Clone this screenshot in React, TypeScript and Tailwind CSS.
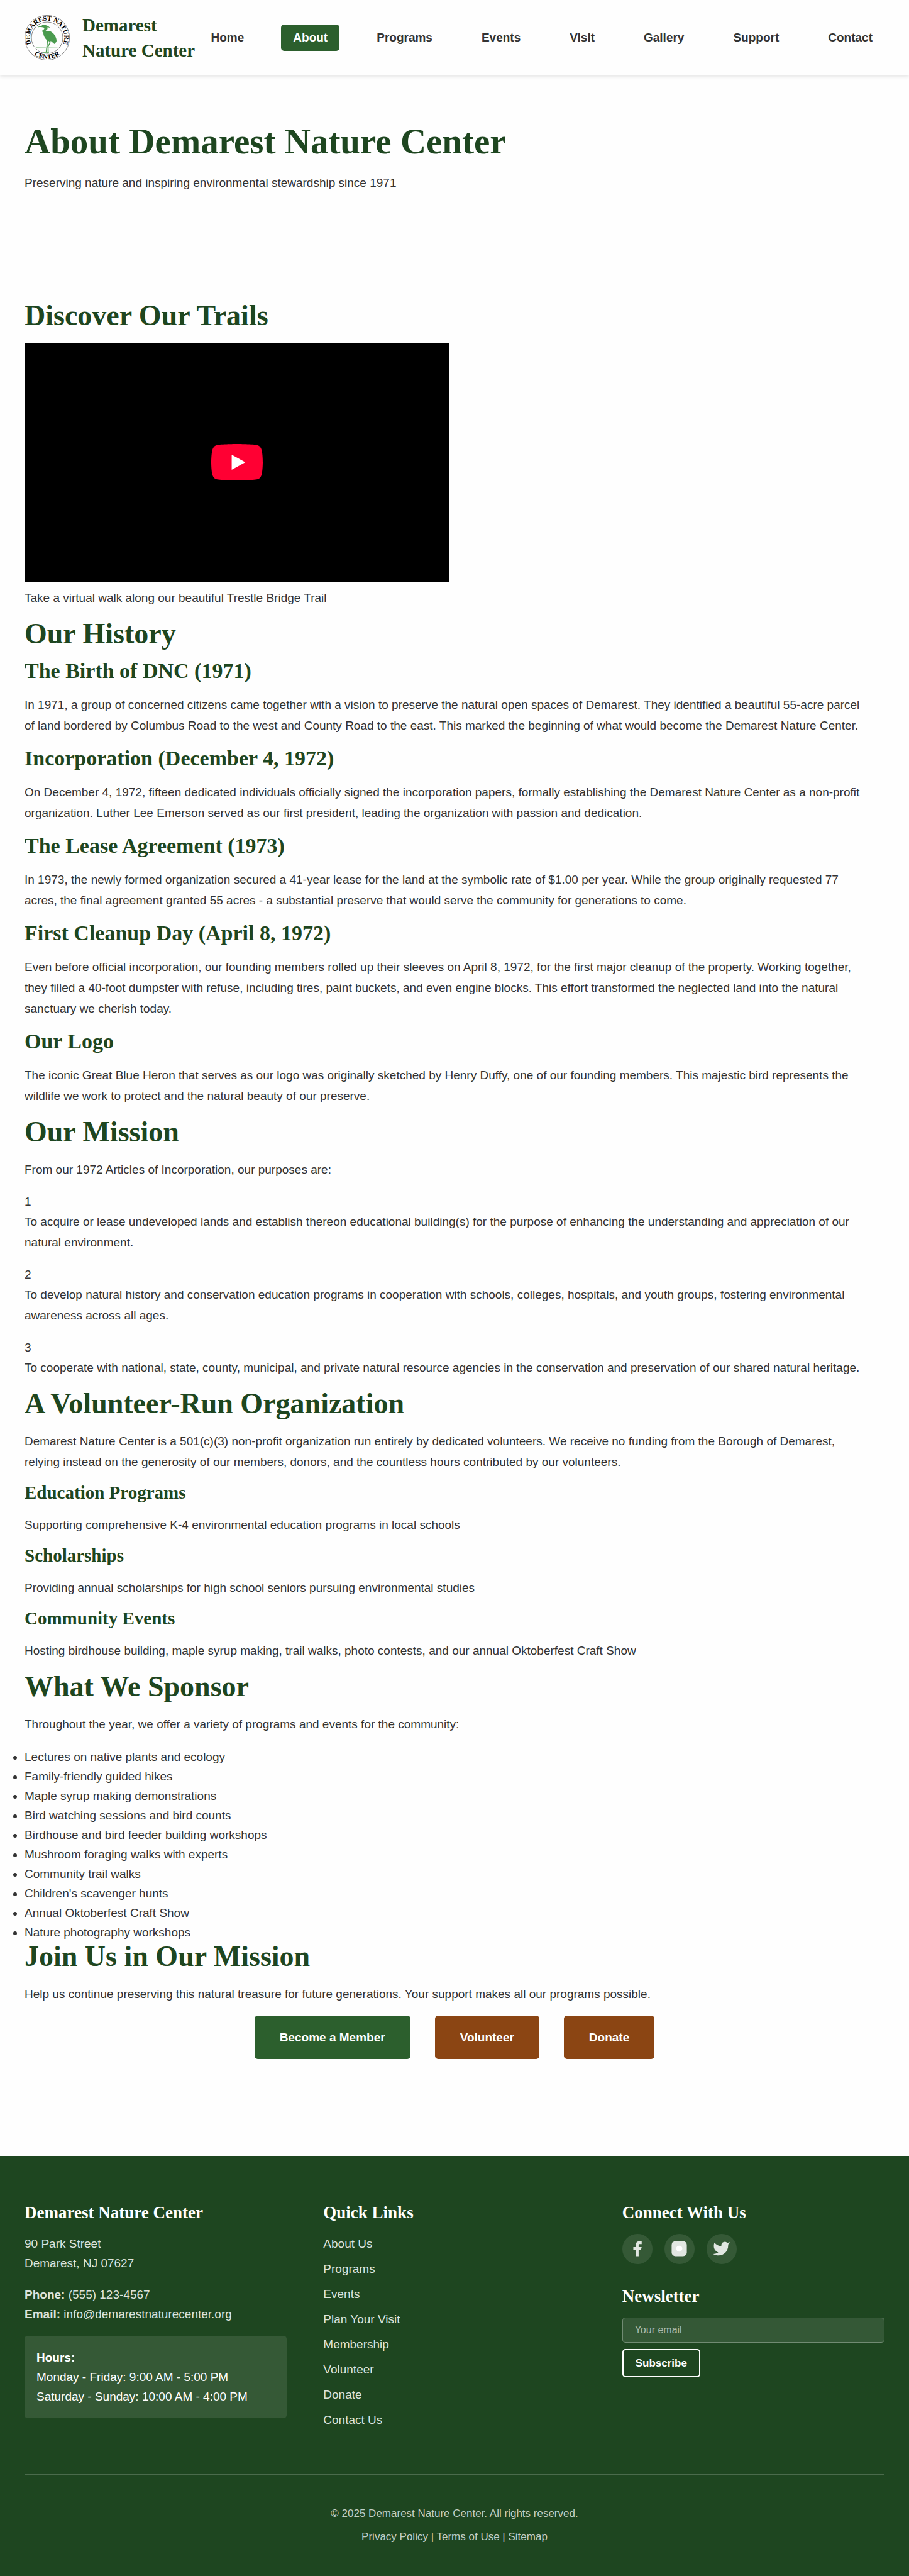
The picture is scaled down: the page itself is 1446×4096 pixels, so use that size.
import React from "react";

const navItems = ["Home", "About", "Programs", "Events", "Visit", "Gallery", "Support", "Contact"];

const history = [
  {
    title: "The Birth of DNC (1971)",
    text: "In 1971, a group of concerned citizens came together with a vision to preserve the natural open spaces of Demarest. They identified a beautiful 55-acre parcel of land bordered by Columbus Road to the west and County Road to the east. This marked the beginning of what would become the Demarest Nature Center.",
  },
  {
    title: "Incorporation (December 4, 1972)",
    text: "On December 4, 1972, fifteen dedicated individuals officially signed the incorporation papers, formally establishing the Demarest Nature Center as a non-profit organization. Luther Lee Emerson served as our first president, leading the organization with passion and dedication.",
  },
  {
    title: "The Lease Agreement (1973)",
    text: "In 1973, the newly formed organization secured a 41-year lease for the land at the symbolic rate of $1.00 per year. While the group originally requested 77 acres, the final agreement granted 55 acres - a substantial preserve that would serve the community for generations to come.",
  },
  {
    title: "First Cleanup Day (April 8, 1972)",
    text: "Even before official incorporation, our founding members rolled up their sleeves on April 8, 1972, for the first major cleanup of the property. Working together, they filled a 40-foot dumpster with refuse, including tires, paint buckets, and even engine blocks. This effort transformed the neglected land into the natural sanctuary we cherish today.",
  },
  {
    title: "Our Logo",
    text: "The iconic Great Blue Heron that serves as our logo was originally sketched by Henry Duffy, one of our founding members. This majestic bird represents the wildlife we work to protect and the natural beauty of our preserve.",
  },
];

const purposes = [
  "To acquire or lease undeveloped lands and establish thereon educational building(s) for the purpose of enhancing the understanding and appreciation of our natural environment.",
  "To develop natural history and conservation education programs in cooperation with schools, colleges, hospitals, and youth groups, fostering environmental awareness across all ages.",
  "To cooperate with national, state, county, municipal, and private natural resource agencies in the conservation and preservation of our shared natural heritage.",
];

const efforts = [
  { title: "Education Programs", text: "Supporting comprehensive K-4 environmental education programs in local schools" },
  { title: "Scholarships", text: "Providing annual scholarships for high school seniors pursuing environmental studies" },
  {
    title: "Community Events",
    text: "Hosting birdhouse building, maple syrup making, trail walks, photo contests, and our annual Oktoberfest Craft Show",
  },
];

const sponsored = [
  "Lectures on native plants and ecology",
  "Family-friendly guided hikes",
  "Maple syrup making demonstrations",
  "Bird watching sessions and bird counts",
  "Birdhouse and bird feeder building workshops",
  "Mushroom foraging walks with experts",
  "Community trail walks",
  "Children's scavenger hunts",
  "Annual Oktoberfest Craft Show",
  "Nature photography workshops",
];

const quickLinks = ["About Us", "Programs", "Events", "Plan Your Visit", "Membership", "Volunteer", "Donate", "Contact Us"];

function Logo() {
  return (
    <svg viewBox="0 0 360 360" className="h-[72px] w-[72px] shrink-0" role="img" aria-label="Demarest Nature Center logo">
      <defs>
        <path id="ring-top" d="M57 237 A136 136 0 1 1 303 237" />
        <path id="ring-bottom" d="M20 237 A170 170 0 0 0 340 237" />
      </defs>
      <circle cx="180" cy="180" r="178" fill="#fff" stroke="#333" strokeWidth="3" />
      <circle cx="180" cy="180" r="125" fill="#fdfdfd" stroke="#333" strokeWidth="3" />
      <g className="font-['Liberation_Serif',serif] font-bold" fill="#000" textAnchor="middle" fontSize="53">
        <text>
          <textPath href="#ring-top" startOffset="50%">DEMAREST NATURE</textPath>
        </text>
        <text>
          <textPath href="#ring-bottom" startOffset="50%">CENTER</textPath>
        </text>
      </g>
      <path
        fill="#4a9a4e"
        d="M103 94L134 86C140 78 156 72 168 80C180 82 196 90 203 102C195 98 188 96 182 96C186 108 180 118 170 122C164 126 168 134 176 128C200 118 235 140 250 180C256 196 256 205 253 214L246 220L244 232C232 230 222 216 212 208C200 208 188 208 180 200C165 188 150 165 150 142C138 130 140 120 150 116C160 110 160 102 150 98C138 96 120 98 103 94Z"
      />
      <g fill="none" stroke="#4a9a4e" strokeLinecap="round">
        <path strokeWidth="8" d="M182 198L179 242L173 292M198 204L203 222L187 248L188 290" />
        <path strokeWidth="6" d="M152 296L192 296" />
        <path strokeWidth="3" d="M97 259L168 260M194 260L261 261" />
      </g>
    </svg>
  );
}

function H2({ children }: { children: React.ReactNode }) {
  return (
    <h2 className="mb-[21px] font-['Liberation_Serif',serif] text-[46px] leading-[45px] font-bold text-[#1e4620]">
      {children}
    </h2>
  );
}

function P({ children }: { children: React.ReactNode }) {
  return <p className="pr-5 leading-[33px]">{children}</p>;
}

function FooterHeading({ children }: { children: React.ReactNode }) {
  return (
    <h3 className="mb-[18px] font-['Liberation_Serif',serif] text-[27px] leading-8 font-bold text-white">{children}</h3>
  );
}

function SocialLink({ label, children }: { label: string; children: React.ReactNode }) {
  return (
    <a href="#" aria-label={label} className="flex h-12 w-12 items-center justify-center rounded-full bg-white/10 text-[#e2e7e2]">
      <svg viewBox="0 0 24 24" className="h-[29px] w-[29px]" fill="currentColor" aria-hidden="true">
        {children}
      </svg>
    </a>
  );
}

export default function App() {
  return (
    <div className="bg-[#fefefe] font-['Liberation_Sans',Arial,sans-serif] text-[19px] leading-[31px] text-[#333]">
      <header className="relative flex h-[120px] items-center justify-between border-b border-[#ddd] bg-[#fefefe] px-[39px] shadow-[0_2px_5px_rgba(0,0,0,0.1)]">
        <a href="#" className="flex items-center gap-5">
          <Logo />
          <span className="font-['Liberation_Serif',serif] text-[29px] leading-10 font-bold whitespace-nowrap text-[#1e4620]">
            Demarest
            <br />
            Nature Center
          </span>
        </a>
        <nav aria-label="Main">
          <ul className="flex gap-10">
            {navItems.map((item) => (
              <li key={item}>
                <a
                  href="#"
                  aria-current={item === "About" ? "page" : undefined}
                  className={
                    item === "About"
                      ? "block rounded-[5px] bg-[#2c5f2d] px-[19px] leading-[42px] font-bold text-white"
                      : "block rounded-[5px] px-[19px] leading-[42px] font-bold"
                  }
                >
                  {item}
                </a>
              </li>
            ))}
          </ul>
        </nav>
      </header>

      <main className="px-[39px] pt-[75px] pb-[154px]">
        <section className="mb-[172px]">
          <h1 className="mb-[19px] font-['Liberation_Serif',serif] text-[57px] leading-[60px] font-bold text-[#1e4620]">
            About Demarest Nature Center
          </h1>
          <p className="leading-[33px]">Preserving nature and inspiring environmental stewardship since 1971</p>
        </section>

        <section className="mb-[18px]">
          <H2>Discover Our Trails</H2>
          <div className="mb-[9px] flex aspect-video max-w-[675px] items-center justify-center bg-black">
            <button type="button" aria-label="Play video">
              <svg viewBox="0 0 68 48" className="h-[58px] w-[82px]" aria-hidden="true">
                <path
                  fill="#ff0033"
                  d="M66.52,7.74c-0.78-2.93-2.49-5.41-5.42-6.19C55.79,.13,34,0,34,0S12.21,.13,6.9,1.55C3.97,2.33,2.27,4.81,1.48,7.74C0.06,13.05,0,24,0,24s0.06,10.95,1.48,16.26c0.78,2.93,2.49,5.41,5.42,6.19C12.21,47.87,34,48,34,48s21.79-0.13,27.1-1.55c2.93-0.78,4.64-3.26,5.42-6.19C67.94,34.95,68,24,68,24S67.94,13.05,66.52,7.74z"
                />
                <path fill="#fff" d="M45,24 27,14 27,34z" />
              </svg>
            </button>
          </div>
          <P>Take a virtual walk along our beautiful Trestle Bridge Trail</P>
        </section>

        <section className="mb-[18px]">
          <H2>Our History</H2>
          <div className="flex flex-col gap-5">
            {history.map((entry) => (
              <article key={entry.title}>
                <h3 className="mb-[21px] font-['Liberation_Serif',serif] text-[34px] leading-8 font-bold text-[#1e4620]">
                  {entry.title}
                </h3>
                <P>{entry.text}</P>
              </article>
            ))}
          </div>
        </section>

        <section className="mb-[18px]">
          <H2>Our Mission</H2>
          <div className="flex flex-col gap-5">
            <P>From our 1972 Articles of Incorporation, our purposes are:</P>
            {purposes.map((purpose, i) => (
              <div key={purpose}>
                <div className="leading-[30px]">{i + 1}</div>
                <P>{purpose}</P>
              </div>
            ))}
          </div>
        </section>

        <section className="mb-[18px]">
          <H2>A Volunteer-Run Organization</H2>
          <div className="flex flex-col gap-5">
            <P>
              Demarest Nature Center is a 501(c)(3) non-profit organization run entirely by dedicated volunteers. We receive no
              funding from the Borough of Demarest, relying instead on the generosity of our members, donors, and the countless
              hours contributed by our volunteers.
            </P>
            {efforts.map((effort) => (
              <article key={effort.title}>
                <h4 className="mb-[22px] font-['Liberation_Serif',serif] text-[29px] leading-[25px] font-bold text-[#1e4620]">
                  {effort.title}
                </h4>
                <P>{effort.text}</P>
              </article>
            ))}
          </div>
        </section>

        <section>
          <H2>What We Sponsor</H2>
          <div className="flex flex-col gap-5">
            <P>Throughout the year, we offer a variety of programs and events for the community:</P>
            <ul className="list-disc">
              {sponsored.map((item) => (
                <li key={item}>{item}</li>
              ))}
            </ul>
          </div>
        </section>

        <section>
          <H2>Join Us in Our Mission</H2>
          <P>
            Help us continue preserving this natural treasure for future generations. Your support makes all our programs
            possible.
          </P>
          <div className="mt-[18px] flex flex-wrap justify-center gap-[39px] leading-[69px] font-bold text-white">
            <a href="#" className="rounded-[5px] bg-[#2c5f2d] px-10">
              Become a Member
            </a>
            <a href="#" className="rounded-[5px] bg-[#8b4513] px-10">
              Volunteer
            </a>
            <a href="#" className="rounded-[5px] bg-[#8b4513] px-10">
              Donate
            </a>
          </div>
        </section>
      </main>

      <footer className="bg-[#1e4620] px-[39px] pt-[74px] pb-[49px] text-white">
        <div className="mb-[71px] grid grid-cols-3 gap-[58px]">
          <section>
            <FooterHeading>Demarest Nature Center</FooterHeading>
            <address className="text-[#dde3dd] not-italic">
              <p className="mb-[19px]">
                90 Park Street
                <br />
                Demarest, NJ 07627
              </p>
              <p className="mb-[19px]">
                <strong>Phone:</strong> <a href="#">(555) 123-4567</a>
                <br />
                <strong>Email:</strong> <a href="#">info@demarestnaturecenter.org</a>
              </p>
            </address>
            <p className="rounded-[5px] bg-white/10 p-[19px]">
              <strong>Hours:</strong>
              <br />
              Monday - Friday: 9:00 AM - 5:00 PM
              <br />
              Saturday - Sunday: 10:00 AM - 4:00 PM
            </p>
          </section>

          <nav aria-label="Quick links">
            <FooterHeading>Quick Links</FooterHeading>
            <ul className="flex flex-col gap-[9px] text-[#dde3dd]">
              {quickLinks.map((link) => (
                <li key={link}>
                  <a href="#">{link}</a>
                </li>
              ))}
            </ul>
          </nav>

          <section>
            <FooterHeading>Connect With Us</FooterHeading>
            <div className="mb-[35px] flex gap-[19px]">
              <SocialLink label="Facebook">
                <path d="M18 2h-3a5 5 0 0 0-5 5v3H7v4h3v8h4v-8h3l1-4h-4V7a1 1 0 0 1 1-1h3z" />
              </SocialLink>
              <SocialLink label="Instagram">
                <rect x="2" y="2" width="20" height="20" rx="5" />
                <circle cx="12" cy="12" r="4" fill="#fff" />
              </SocialLink>
              <SocialLink label="Twitter">
                <path d="M23 3a10.9 10.9 0 0 1-3.14 1.53 4.48 4.48 0 0 0-7.86 3v1A10.66 10.66 0 0 1 3 4s-4 9 5 13a11.64 11.64 0 0 1-7 2c9 5 20 0 20-11.5a4.5 4.5 0 0 0-.08-.83A7.72 7.72 0 0 0 23 3z" />
              </SocialLink>
            </div>
            <FooterHeading>Newsletter</FooterHeading>
            <form className="flex flex-col items-start gap-[10px]" onSubmit={(e) => e.preventDefault()}>
              <label htmlFor="newsletter-email" className="sr-only">
                Your email
              </label>
              <input
                id="newsletter-email"
                type="email"
                placeholder="Your email"
                className="h-10 w-full rounded-[5px] border border-white/30 bg-white/10 px-[19px] text-base text-white placeholder:text-white/60"
              />
              <button type="submit" className="rounded-[5px] border-2 border-white px-[19px] text-[17px] leading-[41px] font-bold">
                Subscribe
              </button>
            </form>
          </section>
        </div>

        <div className="flex flex-col gap-[10px] border-t border-white/20 pt-12 text-center text-[17px] leading-[27px] text-[#c3cec4]">
          <p>© 2025 Demarest Nature Center. All rights reserved.</p>
          <p>
            <a href="#">Privacy Policy</a> | <a href="#">Terms of Use</a> | <a href="#">Sitemap</a>
          </p>
        </div>
      </footer>
    </div>
  );
}
